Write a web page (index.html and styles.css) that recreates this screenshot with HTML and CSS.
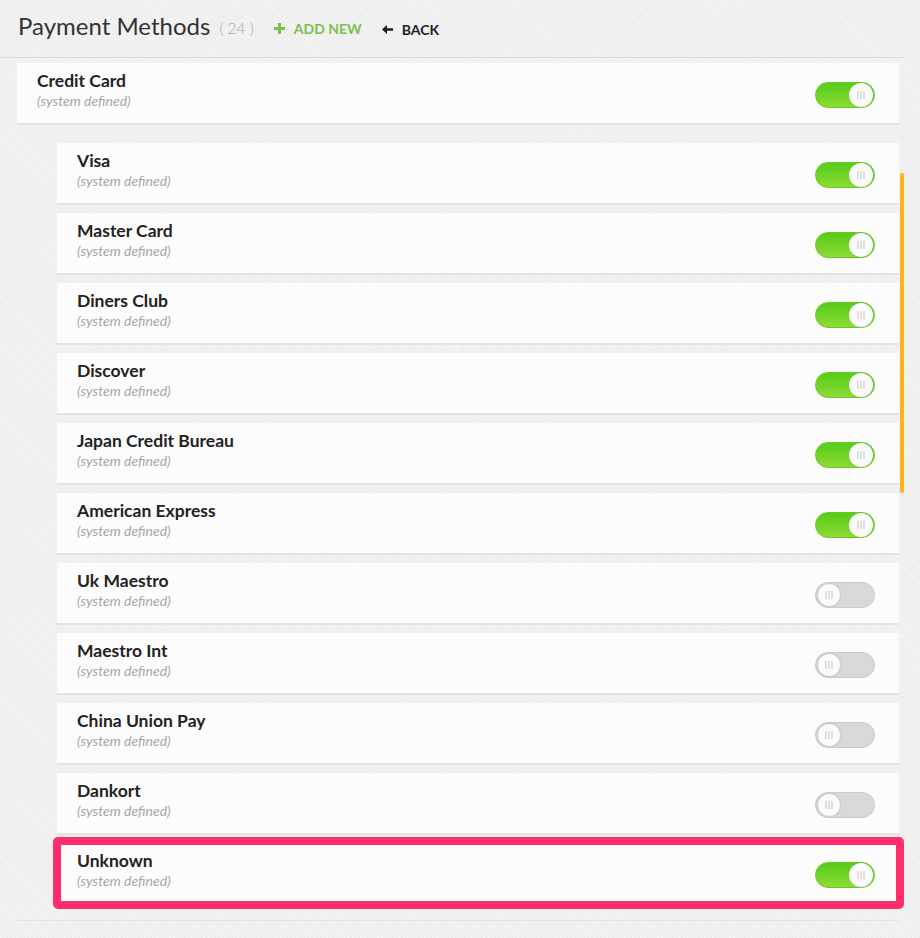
FILE: index.html
```html
<!DOCTYPE html>
<html>
<head>
<meta charset="utf-8">
<link rel="stylesheet" href="styles.css">
</head>
<body>
<div class="page">
  <header class="header">
    <h1 class="title">Payment Methods</h1>
    <span class="count">( 24 )</span>
    <a class="action add"><svg class="icon" width="11" height="11" viewBox="0 0 11 11"><path d="M4 0h3v4h4v3H7v4H4V7H0V4h4z" fill="#7dbf4c"/></svg>ADD NEW</a>
    <a class="action back"><svg class="icon" width="11" height="9" viewBox="0 0 11 9"><path d="M0 4.5L5 0v3.3h6v2.4H5V9z" fill="#1e1e1e"/></svg>BACK</a>
  </header>

  <div class="list">
    <div class="card parent">
      <div class="info"><div class="name">Credit Card</div><div class="sub">(system defined)</div></div>
      <span class="toggle on"><span class="knob"></span></span>
    </div>

    <div class="children">
      <div class="scrollbar"></div>
      <div class="card"><div class="info"><div class="name">Visa</div><div class="sub">(system defined)</div></div><span class="toggle on"><span class="knob"></span></span></div>
      <div class="card"><div class="info"><div class="name">Master Card</div><div class="sub">(system defined)</div></div><span class="toggle on"><span class="knob"></span></span></div>
      <div class="card"><div class="info"><div class="name">Diners Club</div><div class="sub">(system defined)</div></div><span class="toggle on"><span class="knob"></span></span></div>
      <div class="card"><div class="info"><div class="name">Discover</div><div class="sub">(system defined)</div></div><span class="toggle on"><span class="knob"></span></span></div>
      <div class="card"><div class="info"><div class="name">Japan Credit Bureau</div><div class="sub">(system defined)</div></div><span class="toggle on"><span class="knob"></span></span></div>
      <div class="card"><div class="info"><div class="name">American Express</div><div class="sub">(system defined)</div></div><span class="toggle on"><span class="knob"></span></span></div>
      <div class="card"><div class="info"><div class="name">Uk Maestro</div><div class="sub">(system defined)</div></div><span class="toggle off"><span class="knob"></span></span></div>
      <div class="card"><div class="info"><div class="name">Maestro Int</div><div class="sub">(system defined)</div></div><span class="toggle off"><span class="knob"></span></span></div>
      <div class="card"><div class="info"><div class="name">China Union Pay</div><div class="sub">(system defined)</div></div><span class="toggle off"><span class="knob"></span></span></div>
      <div class="card"><div class="info"><div class="name">Dankort</div><div class="sub">(system defined)</div></div><span class="toggle off"><span class="knob"></span></span></div>
      <div class="card highlighted"><div class="info"><div class="name">Unknown</div><div class="sub">(system defined)</div></div><span class="toggle on"><span class="knob"></span></span></div>
    </div>
    <div class="endline"></div>
  </div>
</div>
</body>
</html>
```

FILE: styles.css
```css
* { box-sizing: border-box; }
html, body { margin: 0; padding: 0; }
body {
  background-color: #efefef;
  background-image:
    repeating-linear-gradient(45deg, rgba(255,255,255,0.35) 0 1px, transparent 1px 3px),
    repeating-linear-gradient(-45deg, rgba(0,0,0,0.012) 0 1px, transparent 1px 3px);
  font-family: Lato, "Open Sans", sans-serif;
  color: #222;
  width: 920px;
  height: 938px;
  overflow: hidden;
}
.page { width: 920px; }

.header {
  display: flex;
  align-items: baseline;
  height: 58px;
  padding: 11px 0 0 18px;
  border-bottom: 1px solid #dcdcdc;
  width: 904px;
}
.title {
  margin: 0;
  font-size: 24px;
  font-weight: 400;
  color: #333;
}
.count {
  margin-left: 9px;
  font-size: 15.5px;
  font-weight: 300;
  color: #a8a8a8;
  position: relative;
  top: -1px;
}
.action {
  font-size: 14px;
  font-weight: 700;
  text-decoration: none;
  display: inline-flex;
  align-items: center;
  position: relative;
  top: -1px;
}
.icon { margin-right: 9px; flex-shrink: 0; }
.add { margin-left: 20px; color: #7dbf4c; }
.back { margin-left: 20px; color: #1e1e1e; }

.list {
  padding-top: 5px;
  padding-left: 17px;
  width: 899px;
}
.card {
  display: flex;
  align-items: flex-start;
  justify-content: space-between;
  height: 60px;
  background: #fcfcfc;
  box-shadow: 0 2px 0 #e3e3e3;
  padding: 7px 24px 0 20px;
  position: relative;
}
.children {
  position: relative;
  padding-left: 40px;
  margin-top: 20px;
  display: flex;
  flex-direction: column;
  gap: 10px;
}
.name {
  font-size: 17.5px;
  font-weight: 700;
  line-height: 22px;
  color: #222;
}
.sub {
  font-size: 14px;
  font-style: italic;
  color: #a6a6a6;
  line-height: 18px;
}

.toggle {
  margin-top: 12px;
  width: 60px;
  height: 26px;
  border-radius: 13px;
  position: relative;
  flex-shrink: 0;
}
.toggle.on {
  background: linear-gradient(#55cc17, #8edb35);
  border: 1px solid #6cc82a;
}
.toggle.off {
  background: #d9d9d9;
  border: 1px solid #cacaca;
}
.knob {
  position: absolute;
  top: 0;
  width: 24px;
  height: 24px;
  border-radius: 50%;
  background: #fbfbfb;
  box-shadow: 0 0 1px rgba(0,0,0,0.15);
}
.toggle.on .knob { right: 1px; }
.toggle.off .knob { left: 1px; border: 1px solid #cfcfcf; }
.knob::after {
  content: "";
  position: absolute;
  left: 50%;
  top: 50%;
  width: 7px;
  height: 8px;
  transform: translate(-50%, -50%);
  background:
    linear-gradient(#c4c4c4, #c4c4c4) 0 0 / 1px 100% no-repeat,
    linear-gradient(#c4c4c4, #c4c4c4) 3px 0 / 1px 100% no-repeat,
    linear-gradient(#c4c4c4, #c4c4c4) 6px 0 / 1px 100% no-repeat;
}

.highlighted::before {
  content: "";
  position: absolute;
  top: -6px;
  left: -4px;
  right: -5px;
  bottom: -6px;
  border: 8px solid #ff2d6b;
  border-radius: 5px;
  pointer-events: none;
}

.scrollbar {
  position: absolute;
  right: -5px;
  top: 30px;
  width: 4px;
  height: 320px;
  border-radius: 2px;
  background: #ffb21c;
  z-index: 2;
}

.endline {
  margin-top: 17px;
  height: 1px;
  background: #e2e2e2;
  width: 882px;
}
```
